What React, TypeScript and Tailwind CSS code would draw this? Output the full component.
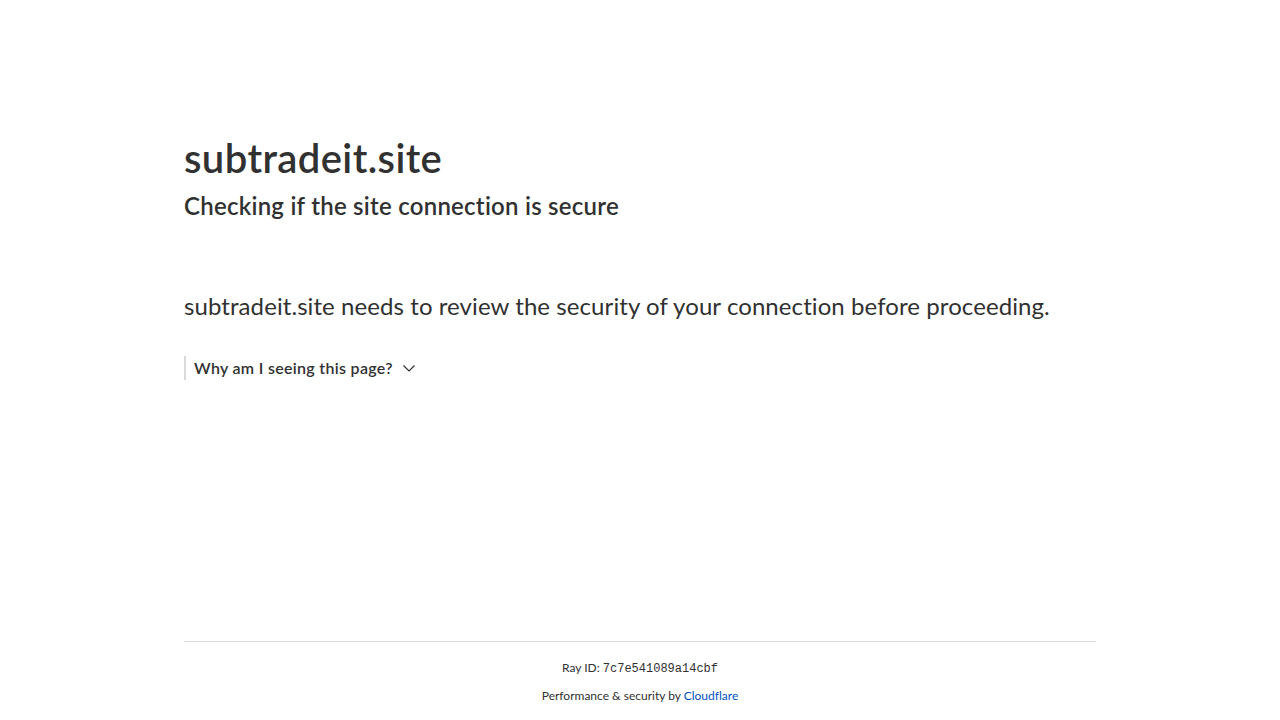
import React from "react";

export default function App() {
  return (
    <div
      className="min-h-screen flex flex-col bg-white text-[#313131] [font-variant-ligatures:none]"
      style={{ fontFamily: 'Lato, "Open Sans", sans-serif' }}
    >
      <div className="flex-1">
        <div className="mx-auto max-w-[960px] px-6 mt-[128px]">
          <h1 className="text-[40px] leading-[60px] font-semibold tracking-[0.4px]">subtradeit.site</h1>
          <h2 className="text-[24px] leading-[36px] font-semibold tracking-[0.25px]">Checking if the site connection is secure</h2>
          <div className="mt-[64px] text-[24px] leading-[36px] font-normal tracking-[0.08px]">
            subtradeit.site needs to review the security of your connection before proceeding.
          </div>
          <div className="mt-[32px] flex items-center border-l-2 border-[#d9d9d9] pl-2 h-[24px]">
            <span className="text-[16px] font-semibold tracking-[0.3px]">Why am I seeing this page?</span>
            <svg width="16" height="16" viewBox="0 0 16 16" className="ml-[8px]" fill="none" stroke="#313131" strokeWidth="1.2">
              <path d="M2.5 5.5 L8 11 L13.5 5.5" />
            </svg>
          </div>
        </div>
      </div>
      <div className="mx-auto w-full max-w-[960px] px-6">
        <div className="border-t border-[#d9d9d9] pt-[17px] pb-[15px] text-center text-[12px]">
          <div className="leading-[18px]">
            Ray ID: <code style={{ fontFamily: '"Liberation Mono", monospace' }}>7c7e541089a14cbf</code>
          </div>
          <div className="mt-[9px] leading-[18px]">
            Performance &amp; security by <a className="text-[#0051c3]">Cloudflare</a>
          </div>
        </div>
      </div>
    </div>
  );
}
